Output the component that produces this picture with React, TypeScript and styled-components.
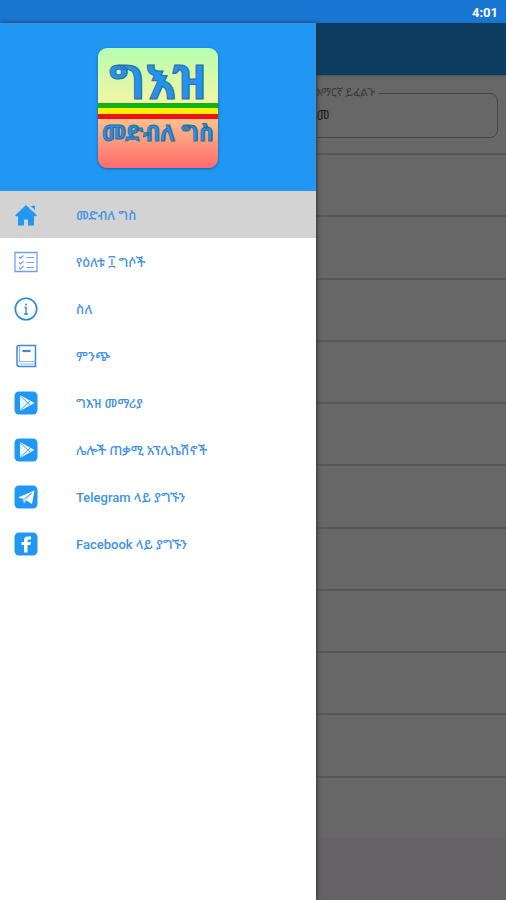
import React from "react";
import styled, { createGlobalStyle } from "styled-components";

const ethiopic = `Roboto, "Noto Sans Ethiopic", "Abyssinica SIL", "Noto Sans", sans-serif`;

const GlobalStyle = createGlobalStyle`
  * { box-sizing: border-box; }
  body { margin: 0; font-family: ${ethiopic}; }
`;

const Screen = styled.div`
  position: relative;
  display: flex;
  flex-direction: column;
  min-height: 100vh;
  background: #676767;
`;

const StatusBar = styled.header`
  display: flex;
  align-items: center;
  justify-content: flex-end;
  height: 23px;
  padding: 2px 8px 0;
  background: #1976d2;
  color: #fff;
  font-size: 13px;
  font-weight: 700;
`;

const Toolbar = styled.div`
  height: 52px;
  background: #0d3c61;
  box-shadow: 0 1px 2px #4a4f54;
`;

const SearchArea = styled.div`
  display: grid;
  grid-template-columns: 3fr 2fr;
  gap: 8px;
  height: 80px;
  padding: 11px 8px 15px;
  border-bottom: 2px solid #575757;
`;

const Field = styled.fieldset`
  min-width: 0;
  margin: 0;
  padding: 0 10px;
  border: 1px solid #454545;
  border-radius: 8px;
`;

const Legend = styled.legend`
  padding: 0 4px 0 0;
  color: #383838;
  font-size: 11px;
  line-height: 14px;
  white-space: nowrap;
`;

const SearchInput = styled.input`
  width: 100%;
  height: 28px;
  padding: 0;
  border: 0;
  outline: 0;
  background: transparent;
  color: #1c1c1c;
  font-family: inherit;
  font-size: 14px;
`;

const WordList = styled.ul`
  display: flex;
  flex: 1;
  flex-direction: column;
  margin: 0;
  padding: 0;
  list-style: none;
`;

const WordRow = styled.li`
  flex: 1;
  border-bottom: 2px solid #575757;
  &:last-child { border-bottom: 0; }
`;

const AdSlot = styled.footer`
  height: 62px;
  background: #666366;
`;

const Drawer = styled.aside`
  position: absolute;
  top: 23px;
  bottom: 0;
  left: 0;
  width: 316px;
  background: #fff;
  box-shadow: 1px 0 4px #333;
`;

const DrawerHeader = styled.div`
  display: flex;
  align-items: center;
  justify-content: center;
  height: 168px;
  padding-top: 2px;
  background: #2196f3;
`;

const Logo = styled.div`
  display: flex;
  flex-direction: column;
  width: 120px;
  height: 120px;
  overflow: hidden;
  border-radius: 9px;
  background: linear-gradient(#b5ffb0 0, #f2f5a5 54px, #fbc08c 72px, #ff6b6b 120px);
  box-shadow: 0 1px 3px #1b5f9b;
  color: #2492ee;
  font-weight: 700;
  text-align: center;
  white-space: nowrap;
  -webkit-text-stroke: 1px #2b6b96;
`;

const LogoTitle = styled.div`
  height: 55px;
  padding-top: 11px;
  font-size: 47px;
  line-height: 48px;
`;

const Flag = styled.div`
  flex: none;
  height: 16px;
  background: linear-gradient(#12b212 0 5px, #fff200 5px 11px, #f01010 11px);
`;

const LogoSubtitle = styled.div`
  font-size: 23px;
  line-height: 30px;
`;

const Menu = styled.nav`
  display: flex;
  flex-direction: column;
`;

const MenuLink = styled.a<{ $active?: boolean }>`
  display: flex;
  align-items: center;
  gap: 38px;
  height: 47px;
  padding: 0 14px;
  background: ${(p) => (p.$active ? "#d3d3d3" : "transparent")};
  color: #3d91ea;
  font-size: 13px;
  font-weight: 500;
  text-decoration: none;
  white-space: nowrap;
`;

const Icon = styled.svg`
  flex: none;
  width: 24px;
  height: 24px;
`;

const blue = "#2196f3";

const HomeIcon = () => (
  <Icon viewBox="0 0 24 24" fill={blue}>
    <path d="M12 2 1 12.500l1 1L4 13v9.500h6v-6h4v6h6V13l2 .5 1-1-4-4-2-1.500z" />
    <path d="M16.500 3.500 20 2.500l1 .5v4l-2-2z" />
  </Icon>
);

const ChecklistIcon = () => (
  <Icon viewBox="0 0 24 24" fill="none" stroke="#6da1ee">
    <path d="M1 2.500h22v19H1z" strokeWidth="1.300" />
    <path d="m5 7 1.500 1.500L9.500 5.500M5 12.500 6.500 14l3-3M5 17.500 6.500 19l3-3M12.500 7.500h7.500m-7.500 5h7.500m-7.500 5h7.500" strokeWidth="1.200" />
  </Icon>
);

const InfoIcon = () => (
  <Icon viewBox="0 0 24 24" fill="none" stroke="#2688e0">
    <circle cx="12" cy="12" r="10.700" strokeWidth="1.600" />
    <path d="M10.500 10.500H12V17m-2 0h4" strokeWidth="1.300" />
    <circle cx="12" cy="7.500" r="1" fill="#2688e0" stroke="none" />
  </Icon>
);

const BookIcon = () => (
  <Icon viewBox="0 0 24 24" fill="none" stroke="#3b88df">
    <path d="M3 20V3.500Q3 1.500 5 1.500h16.500v21H5.500Q3 22.500 3 20" strokeWidth="1.500" />
    <path d="M5.500 2v15.500M3 19.500q0-2 2.500-2h16M5.500 20H21" stroke="#8db8ef" />
    <path d="M8.500 7h8" strokeWidth="2.200" />
  </Icon>
);

const PlayIcon = () => (
  <Icon viewBox="0 0 24 24">
    <rect x=".5" y=".5" width="23" height="23" rx="4.500" fill={blue} />
    <path d="M6 4v16l14.500-8z" fill="#eaf5ff" />
    <path d="m6 4.500 10.500 10M6 19.500l10.500-10" stroke={blue} strokeWidth=".8" />
  </Icon>
);

const TelegramIcon = () => (
  <Icon viewBox="0 0 24 24">
    <rect x=".5" y=".5" width="23" height="23" rx="4.500" fill={blue} />
    <path d="M4 12.500 20.500 5.500 18 19l-5.500-3.500L10 18.500l-1-4.500z" fill="#fff" />
    <path d="m9.500 14.500 8-6.500-6 7-1 2.500" fill="none" stroke={blue} strokeWidth=".7" />
  </Icon>
);

const FacebookIcon = () => (
  <Icon viewBox="0 0 24 24">
    <rect x=".5" y=".5" width="23" height="23" rx="4.500" fill={blue} />
    <path d="M10 20.500V13H7.500v-3H10V8.500Q10 4.500 13.500 4.500H17v3h-2.300Q13.500 7.500 13.500 9v1H17l-.5 3h-3v7.500z" fill="#fff" />
  </Icon>
);

const items = [
  { icon: HomeIcon, label: "መድብለ ግስ", active: true },
  { icon: ChecklistIcon, label: "የዕለቱ ፲ ግሶች" },
  { icon: InfoIcon, label: "ስለ" },
  { icon: BookIcon, label: "ምንጭ" },
  { icon: PlayIcon, label: "ግእዝ መማሪያ" },
  { icon: PlayIcon, label: "ሌሎች ጠቃሚ አፕሊኬሽኖች" },
  { icon: TelegramIcon, label: "Telegram ላይ ያግኙን" },
  { icon: FacebookIcon, label: "Facebook ላይ ያግኙን" },
];

export default function App() {
  return (
    <>
      <GlobalStyle />
      <Screen>
        <StatusBar>4:01</StatusBar>
        <Toolbar />
        <SearchArea>
          <div />
          <Field>
            <Legend><label htmlFor="amharic">አማርኛ ይፈልጉ</label></Legend>
            <SearchInput id="amharic" defaultValue="መ" />
          </Field>
        </SearchArea>
        <WordList>
          {Array.from({ length: 11 }, (_, i) => <WordRow key={i} />)}
        </WordList>
        <AdSlot />
        <Drawer>
          <DrawerHeader>
            <Logo>
              <LogoTitle>ግእዝ</LogoTitle>
              <Flag />
              <LogoSubtitle>መድብለ ግስ</LogoSubtitle>
            </Logo>
          </DrawerHeader>
          <Menu>
            {items.map(({ icon: ItemIcon, label, active }) => (
              <MenuLink key={label} href="#" $active={active}>
                <ItemIcon />
                {label}
              </MenuLink>
            ))}
          </Menu>
        </Drawer>
      </Screen>
    </>
  );
}
